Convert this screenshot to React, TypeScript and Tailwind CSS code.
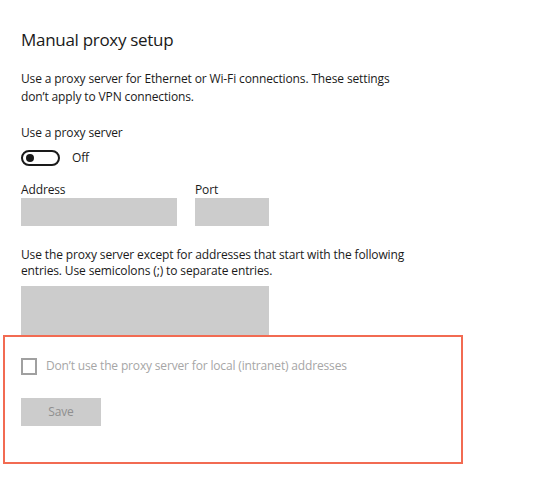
import React, { useState } from 'react';

const font = { fontFamily: '"Open Sans", "Noto Sans", sans-serif' };

const Toggle: React.FC<{ on: boolean; onChange: (v: boolean) => void }> = ({ on, onChange }) => (
  <button
    onClick={() => onChange(!on)}
    className="flex items-center gap-3"
  >
    <span className="w-[39px] h-[16px] rounded-full border-2 border-[#1a1a1a] flex items-center px-[3px]">
      <span className="w-[8px] h-[8px] rounded-full bg-[#1a1a1a]" />
    </span>
    <span className="text-[12px] text-[#1a1a1a]">{on ? 'On' : 'Off'}</span>
  </button>
);

export default function App() {
  const [proxy, setProxy] = useState(false);

  return (
    <div className="w-[554px] h-[478px] bg-white overflow-hidden relative tracking-[-0.13px]" style={font}>
      <div className="px-[21px] pt-[27px]">
        <h1 className="text-[17px] leading-[26px] tracking-[-0.3px] text-[#1a1a1a]">Manual proxy setup</h1>

        <p className="mt-[17px] text-[12px] leading-[18px] text-[#1a1a1a]">
          Use a proxy server for Ethernet or Wi-Fi connections. These settings
          <br />
          don’t apply to VPN connections.
        </p>

        <div className="mt-[18px] text-[12px] leading-[18px] text-[#1a1a1a]">Use a proxy server</div>
        <div className="mt-[7px]">
          <Toggle on={proxy} onChange={setProxy} />
        </div>

        <div className="mt-[15px] flex gap-[18px]">
          <div className="flex flex-col">
            <span className="text-[12px] leading-[16px] text-[#1a1a1a]">Address</span>
            <div className="w-[156px] h-[28px] bg-[#cccccc]" />
          </div>
          <div className="flex flex-col">
            <span className="text-[12px] leading-[16px] text-[#1a1a1a]">Port</span>
            <div className="w-[74px] h-[28px] bg-[#cccccc]" />
          </div>
        </div>

        <p className="mt-[21px] text-[12px] leading-[16px] text-[#1a1a1a]">
          Use the proxy server except for addresses that start with the following
          <br />
          entries. Use semicolons (;) to separate entries.
        </p>
        <div className="mt-[7px] w-[248px] h-[49px] bg-[#cccccc]" />
      </div>

      <div className="ml-[3px] w-[460px] h-[129px] border-2 border-[#f26b52] px-[16px] pt-[20px]">
        <label className="flex items-center gap-[9px]">
          <span className="w-[16px] h-[17px] border-2 border-[#a0a0a0]" />
          <span className="text-[12px] tracking-[-0.16px] text-[#a6a6a6]">Don’t use the proxy server for local (intranet) addresses</span>
        </label>
        <button className="mt-[23px] w-[80px] h-[28px] bg-[#cccccc] text-[12px] text-[#8f8f8f]">Save</button>
      </div>
    </div>
  );
}
